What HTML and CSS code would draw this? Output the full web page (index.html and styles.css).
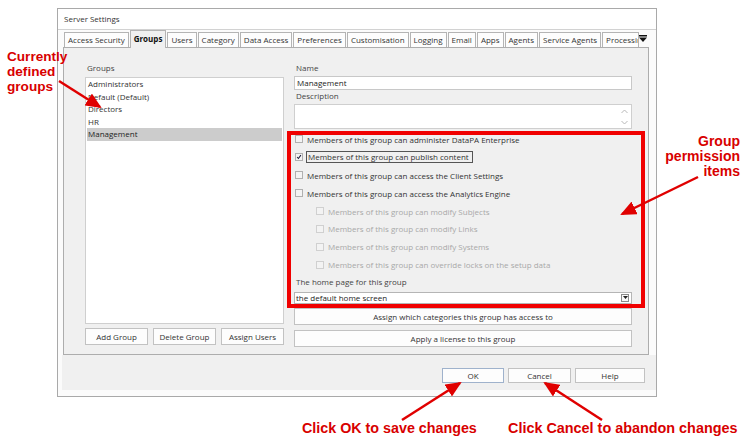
FILE: index.html
```html
<!DOCTYPE html>
<html>
<head>
<meta charset="utf-8">
<link rel="stylesheet" href="styles.css">
</head>
<body>
<div class="stage">
  <div class="window">
    <div class="titlebar">Server Settings</div>
    <div class="winbody">
      <div class="tabstrip">
        <span class="tab">Access Security</span>
        <span class="tab active">Groups</span>
        <span class="tab">Users</span>
        <span class="tab">Category</span>
        <span class="tab">Data Access</span>
        <span class="tab">Preferences</span>
        <span class="tab">Customisation</span>
        <span class="tab">Logging</span>
        <span class="tab">Email</span>
        <span class="tab">Apps</span>
        <span class="tab">Agents</span>
        <span class="tab">Service Agents</span>
        <span class="tab clipped"><span class="cliptext">Processing</span></span>
        <span class="tabmenu"><svg width="8" height="7" viewBox="0 0 8 7"><rect x="0" y="0" width="8" height="1.5" fill="#111"/><path d="M0 2.5 H8 L4 7 Z" fill="#111"/></svg></span>
      </div>
      <div class="panel">
        <div class="leftcol">
          <div class="label">Groups</div>
          <div class="listbox">
            <div class="item">Administrators</div>
            <div class="item">Default (Default)</div>
            <div class="item">Directors</div>
            <div class="item">HR</div>
            <div class="item selected">Management</div>
          </div>
          <div class="btnrow">
            <div class="btn">Add Group</div>
            <div class="btn">Delete Group</div>
            <div class="btn">Assign Users</div>
          </div>
        </div>
        <div class="rightcol">
          <div class="label">Name</div>
          <div class="textbox">Management</div>
          <div class="label">Description</div>
          <div class="textarea">
            <div class="scrollarrows">
              <svg width="7" height="5" viewBox="0 0 7 5"><path d="M0.5 4 L3.5 1 L6.5 4" fill="none" stroke="#b8b8b8" stroke-width="1"/></svg>
              <svg width="7" height="5" viewBox="0 0 7 5"><path d="M0.5 1 L3.5 4 L6.5 1" fill="none" stroke="#b8b8b8" stroke-width="1"/></svg>
            </div>
          </div>
          <div class="checks">
            <div class="chk"><span class="box"></span><span class="txt">Members of this group can administer DataPA Enterprise</span></div>
            <div class="chk"><span class="box checked"><svg width="8" height="8" viewBox="0 0 8 8"><path d="M1.5 4 L3.2 6 L6.5 1.5" fill="none" stroke="#1a1a3a" stroke-width="1.4"/></svg></span><span class="txt focus">Members of this group can publish content</span></div>
            <div class="chk"><span class="box"></span><span class="txt">Members of this group can access the Client Settings</span></div>
            <div class="chk"><span class="box"></span><span class="txt">Members of this group can access the Analytics Engine</span></div>
            <div class="chk sub disabled"><span class="box"></span><span class="txt">Members of this group can modify Subjects</span></div>
            <div class="chk sub disabled"><span class="box"></span><span class="txt">Members of this group can modify Links</span></div>
            <div class="chk sub disabled"><span class="box"></span><span class="txt">Members of this group can modify Systems</span></div>
            <div class="chk sub disabled"><span class="box"></span><span class="txt">Members of this group can override locks on the setup data</span></div>
          </div>
          <div class="label home">The home page for this group</div>
          <div class="select"><span>the default home screen</span><span class="dd"><svg width="5" height="3" viewBox="0 0 5 3"><path d="M0 0 H5 L2.5 3 Z" fill="#222"/></svg></span></div>
          <div class="btn wide">Assign which categories this group has access to</div>
          <div class="btn wide">Apply a license to this group</div>
        </div>
      </div>
      <div class="dialogbtns">
        <div class="btn dlg default">OK</div>
        <div class="btn dlg">Cancel</div>
        <div class="btn dlg help">Help</div>
      </div>
    </div>
  </div>

  <div class="redbox"></div>

  <div class="note note-groups">Currently<br>defined<br>groups</div>
  <div class="note note-perm">Group<br>permission<br>items</div>
  <div class="note note-ok">Click OK to save changes</div>
  <div class="note note-cancel">Click Cancel to abandon changes</div>

  <svg class="arrows" width="752" height="441" viewBox="0 0 752 441">
    <defs>
      <marker id="head" markerUnits="userSpaceOnUse" markerWidth="16" markerHeight="14" refX="14" refY="7" orient="auto">
        <path d="M0 0 L16 7 L0 14 Z" fill="#e00000"/>
      </marker>
    </defs>
    <line x1="59" y1="81" x2="100" y2="107" stroke="#e00000" stroke-width="2.5" marker-end="url(#head)"/>
    <line x1="698" y1="177" x2="622" y2="214" stroke="#e00000" stroke-width="2.5" marker-end="url(#head)"/>
    <line x1="402" y1="420" x2="460" y2="383" stroke="#e00000" stroke-width="2.5" marker-end="url(#head)"/>
    <line x1="602" y1="420" x2="545" y2="383" stroke="#e00000" stroke-width="2.5" marker-end="url(#head)"/>
  </svg>
</div>
</body>
</html>
```

FILE: styles.css
```css
* { box-sizing: border-box; }
html, body { margin: 0; padding: 0; background: #ffffff; }
body { font-family: "Open Sans", "Noto Sans", sans-serif; font-size: 8px; color: #222; }

.stage { position: relative; width: 752px; height: 441px; overflow: hidden; padding-top: 8px; }

.window {
  margin-left: 57px;
  width: 600px;
  height: 389px;
  border: 1px solid #a9a9a9;
  background: #fbfbfb;
  display: flex;
  flex-direction: column;
}
.titlebar {
  height: 21px;
  line-height: 20px;
  padding-left: 6px;
  border-bottom: 1px solid #d2d2d2;
  background: #fff;
  color: #333;
}
.winbody { flex: 1; display: flex; flex-direction: column; }

.tabstrip {
  height: 17px;
  display: flex;
  align-items: flex-end;
  padding-left: 6px;
  position: relative;
  z-index: 1;
}
.tab {
  height: 15px;
  line-height: 14px;
  padding: 0 3px;
  margin-right: 1px;
  border: 1px solid #b4b4b4;
  border-bottom: none;
  background: #fdfdfd;
  color: #333;
  white-space: nowrap;
}
.tab.active {
  height: 18px;
  line-height: 16px;
  font-weight: bold;
  color: #111;
  background: #f0f0f0;
  margin-bottom: -1px;
  margin-right: 1px;
  padding: 0 3px;
}
.tab.clipped { width: 37px; overflow: hidden; padding-right: 0; margin-right: 0; }
.tab.clipped .cliptext { display: block; width: 33px; overflow: hidden; }
.tabmenu { height: 15px; width: 8px; display: flex; align-items: flex-start; padding-top: 3px; margin-left: 0; }
.tabmenu svg { display: block; }

.panel {
  margin-left: 5px;
  width: 586px;
  height: 308px;
  border: 1px solid #adadad;
  background: #f0f0f0;
  display: flex;
  padding: 14px 0 0 21px;
  gap: 10px;
}
.label { height: 12px; line-height: 12px; color: #444; padding-left: 2px; }

.leftcol { width: 199px; display: flex; flex-direction: column; }
.listbox {
  margin-top: 3px;
  height: 247px;
  background: #fff;
  border: 1px solid #cfcfcf;
}
.item { height: 12.5px; line-height: 12.5px; padding-left: 2px; color: #333; }
.item.selected { background: #cccccc; margin: 0 1px; padding-left: 1px; color: #222; }
.btnrow { margin-top: 4px; display: flex; gap: 5px; }
.btnrow .btn { flex: 1; }

.btn {
  height: 17px;
  line-height: 15px;
  border: 1px solid #c2c2c2;
  background: #fdfdfd;
  text-align: center;
  color: #333;
}

.rightcol { width: 338px; display: flex; flex-direction: column; }
.textbox {
  height: 14px;
  line-height: 12px;
  margin-top: 2px;
  background: #fff;
  border: 1px solid #c8c8c8;
  padding-left: 2px;
  color: #222;
}
.rightcol .label + .textarea { margin-top: 2px; }
.textarea {
  height: 25px;
  background: #fff;
  border: 1px solid #cfcfcf;
  display: flex;
  justify-content: flex-end;
}
.scrollarrows { width: 14px; display: flex; flex-direction: column; align-items: center; justify-content: space-between; padding: 4px 0 3px; }
.scrollarrows svg { display: block; }

.checks { display: flex; flex-direction: column; margin-top: 1.5px; }
.chk { height: 17.9px; display: flex; align-items: center; padding-left: 1px; }
.chk .box {
  width: 8px; height: 8px;
  border: 1px solid #b0b0b0;
  background: #f4f4f4;
  margin-right: 4px;
  flex: none;
  display: flex; align-items: center; justify-content: center;
}
.chk .box svg { display: block; }
.chk .txt { white-space: nowrap; color: #333; }
.chk .txt.focus { border: 1px solid #555; padding: 0 3px 0 1px; margin-left: -1px; line-height: 10px; }
.chk.sub { padding-left: 22px; }
.chk.disabled .box { border-color: #d0d0d0; background: #f3f3f3; }
.chk.disabled .txt { color: #a8a8a8; }

.label.home { margin-top: 2px; }
.select {
  margin-top: 4px;
  height: 12px;
  background: #fff;
  border: 1px solid #b5b5b5;
  display: flex;
  align-items: center;
  justify-content: space-between;
  padding-left: 1px;
  padding-right: 2px;
  color: #222;
  line-height: 10px;
}
.select .dd {
  width: 8px; height: 8px;
  border: 1px solid #8a8a8a;
  background: #f8f8f8;
  display: flex; align-items: center; justify-content: center;
}
.select .dd svg { display: block; }
.btn.wide { margin-top: 4px; }
.btn.wide + .btn.wide { margin-top: 5px; }

.dialogbtns {
  margin-left: 4px;
  height: 35px;
  background: #f0f0f0;
  display: flex;
  justify-content: flex-end;
  align-items: flex-start;
  padding-top: 13px;
  padding-right: 11px;
  gap: 4px;
}
.btn.dlg { width: 63px; height: 15px; line-height: 13px; }
.btn.dlg.default { width: 62px; border-color: #9fb2cc; }
.btn.dlg.help { width: 70px; }

.redbox {
  position: absolute;
  left: 287px; top: 131px;
  width: 358px; height: 177px;
  border: 4.5px solid #f00000;
}

.note {
  position: absolute;
  font-family: "Liberation Sans", Arial, sans-serif;
  font-weight: bold;
  font-size: 14px;
  line-height: 15px;
  color: #d80000;
  white-space: nowrap;
}
.note-groups { left: 7px; top: 49px; font-size: 13.6px; }
.note-perm { right: 12px; top: 134px; text-align: right; }
.note-ok { left: 302px; top: 421px; font-size: 14.3px; }
.note-cancel { left: 508px; top: 421px; font-size: 14.4px; }

.arrows { position: absolute; left: 0; top: 0; pointer-events: none; }
```
